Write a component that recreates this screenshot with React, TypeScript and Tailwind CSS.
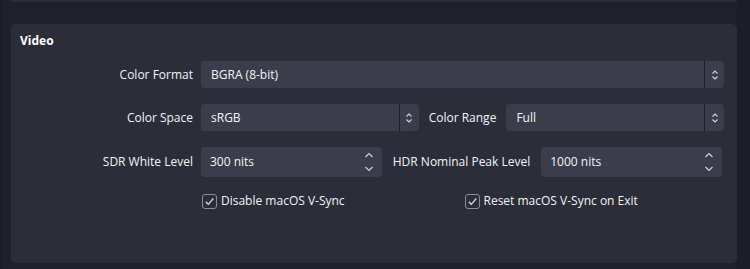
import React from 'react';

const font = { fontFamily: '"Open Sans", "Noto Sans", sans-serif' };

function ComboArrows() {
  return (
    <div className="flex h-full w-[20px] items-center justify-center border-l border-[#1e1f28]">
      <svg width="8" height="14" viewBox="0 0 8 14" fill="none" stroke="#d4d5da" strokeWidth="1.1">
        <path d="M1.5 5.5 L4 3 L6.5 5.5" />
        <path d="M1.5 8.5 L4 11 L6.5 8.5" />
      </svg>
    </div>
  );
}

function Combo({ value }: { value: string }) {
  return (
    <div className="flex h-[27px] flex-1 items-center rounded-[4px] bg-[#3b3e4a]">
      <span className="flex-1 pl-[10px] text-[12px] text-[#f4f4f6]">{value}</span>
      <ComboArrows />
    </div>
  );
}

function Spin({ value }: { value: string }) {
  return (
    <div className="flex h-[30px] flex-1 items-center rounded-[4px] bg-[#3b3e4a]">
      <span className="flex-1 pl-[9px] text-[12px] text-[#f4f4f6]">{value}</span>
      <div className="flex w-[26px] flex-col items-center justify-center">
        <svg width="10" height="22" viewBox="0 0 10 22" fill="none" stroke="#d4d5da" strokeWidth="1.1">
          <path d="M1.5 6 L5 2.5 L8.5 6" />
          <path d="M1.5 16 L5 19.5 L8.5 16" />
        </svg>
      </div>
    </div>
  );
}

function Check({ label }: { label: string }) {
  return (
    <div className="flex items-center gap-[4px] pl-[1px]">
      <div className="flex h-[15px] w-[15px] items-center justify-center rounded-[3px] border-[1.5px] border-[#8c8e97]">
        <svg width="11" height="11" viewBox="0 0 11 11" fill="none" stroke="#d9dade" strokeWidth="1.3">
          <path d="M1.8 5.8 L4.3 8.3 L9.3 2.5" />
        </svg>
      </div>
      <span className="text-[12px] text-[#f4f4f6]">{label}</span>
    </div>
  );
}

export default function App() {
  return (
    <div className="flex h-[269px] w-[750px] bg-[#1f2029]" style={font}>
      <div className="w-[3px] bg-[#1b1c24]" />
      <div className="flex flex-1 flex-col pl-[8px]">
        <div className="h-[2px] rounded-b-[4px] bg-[#2b2d38]" />
        <div className="mt-[22px] h-[239px] rounded-[5px] bg-[#2b2d38] pr-[13px]">
          <div className="pl-[9px] pt-[8px] text-[12px] font-bold leading-[18px] text-white">Video</div>

          <div className="mt-[11px] flex items-center">
            <div className="w-[182px] text-right text-[12px] text-[#f4f4f6]">Color Format</div>
            <div className="ml-[8px] flex flex-1">
              <Combo value="BGRA (8-bit)" />
            </div>
          </div>

          <div className="mt-[16px] flex items-center">
            <div className="w-[182px] text-right text-[12px] text-[#f4f4f6]">Color Space</div>
            <div className="ml-[8px] flex flex-1 items-center">
              <Combo value="sRGB" />
              <span className="mx-[10px] text-[12px] text-[#f4f4f6]">Color Range</span>
              <Combo value="Full" />
            </div>
          </div>

          <div className="mt-[16px] flex items-center">
            <div className="w-[182px] text-right text-[12px] text-[#f4f4f6]">SDR White Level</div>
            <div className="ml-[8px] mr-[2px] flex flex-1 items-center">
              <Spin value="300 nits" />
              <span className="mx-[11px] text-[12px] text-[#f4f4f6]">HDR Nominal Peak Level</span>
              <Spin value="1000 nits" />
            </div>
          </div>

          <div className="mt-[15px] flex items-center">
            <div className="w-[182px]" />
            <div className="ml-[8px] flex flex-1 items-center">
              <div className="flex-1">
                <Check label="Disable macOS V-Sync" />
              </div>
              <div className="flex-1 pl-[2px]">
                <Check label="Reset macOS V-Sync on Exit" />
              </div>
            </div>
          </div>
        </div>
      </div>
      <div className="w-[13px] bg-[#1c1d26]" />
    </div>
  );
}
